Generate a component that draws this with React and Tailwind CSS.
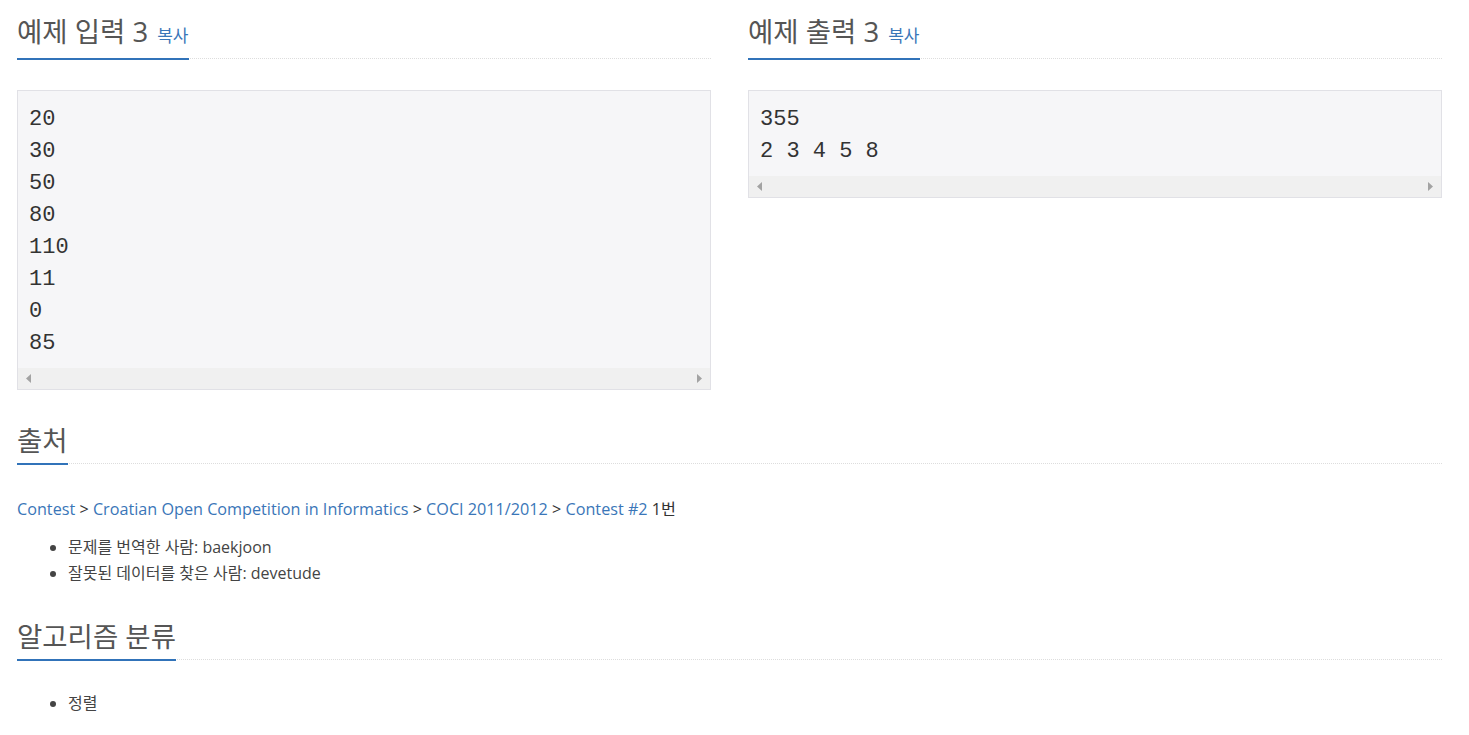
import React from "react";

const FONT = { fontFamily: '"Open Sans", "Noto Sans CJK KR", sans-serif' };
const HFONT = { fontFamily: '"Open Sans", "Noto Sans CJK KR", sans-serif' };
const MONO = { fontFamily: '"Liberation Mono", monospace' };

function Headline({ children, copy, mb = "mb-[31px]" }) {
  return (
    <div className={`border-b border-dotted border-[#dddddd] pt-[14px] ${mb}`}>
      <h2
        className="inline-block border-b-2 border-[#3173b9] mb-[-2px] pb-[4px] text-[27.5px] leading-[36px] font-normal text-[#555555]"
        style={HFONT}
      >
        {children}
        {copy && (
          <span className="ml-[9px] text-[17px] text-[#3a76b8]">복사</span>
        )}
      </h2>
    </div>
  );
}

function Arrow({ dir }) {
  return (
    <svg width="6" height="9" viewBox="0 0 6 9">
      {dir === "left" ? (
        <polygon points="5,0 5,9 0,4.5" fill="#a3a3a3" />
      ) : (
        <polygon points="1,0 1,9 6,4.5" fill="#a3a3a3" />
      )}
    </svg>
  );
}

function Pre({ lines }) {
  return (
    <div className="border border-[#e1e1e6] bg-[#f6f6f8]">
      <pre
        className="pl-[11px] pt-[13px] pb-[8px] text-[22px] leading-[32px] text-[#333333] m-0"
        style={MONO}
      >
        {lines.join("\n")}
      </pre>
      <div className="h-[21px] bg-[#f0f0f0] flex items-center justify-between pl-[8px] pr-[8px]">
        <Arrow dir="left" />
        <Arrow dir="right" />
      </div>
    </div>
  );
}

export default function App() {
  return (
    <div className="bg-white min-h-[735px] pl-[17px] pr-[27px] text-[#333333]" style={FONT}>
      <div className="grid grid-cols-2 gap-[37px]">
        <div>
          <Headline copy>예제 입력 3</Headline>
          <Pre lines={["20", "30", "50", "80", "110", "11", "0", "85"]} />
        </div>
        <div>
          <Headline copy>예제 출력 3</Headline>
          <Pre lines={["355", "2 3 4 5 8"]} />
        </div>
      </div>

      <div className="mt-[19px]">
        <Headline mb="mb-[32px]">출처</Headline>
        <p className="text-[16.2px] leading-[26px] text-[#333333]">
          <a className="text-[#3a76b8]">Contest</a> &gt;{" "}
          <a className="text-[#3a76b8]">Croatian Open Competition in Informatics</a> &gt;{" "}
          <a className="text-[#3a76b8]">COCI 2011/2012</a> &gt;{" "}
          <a className="text-[#3a76b8]">Contest #2</a> 1번
        </p>
        <ul className="list-disc pl-[51px] mt-[12px] text-[16px] leading-[26px] text-[#444444]">
          <li>문제를 번역한 사람: baekjoon</li>
          <li>잘못된 데이터를 찾은 사람: devetude</li>
        </ul>
      </div>

      <div className="mt-[19px]">
        <Headline mb="mb-[30px]">알고리즘 분류</Headline>
        <ul className="list-disc pl-[51px] text-[16px] leading-[26px] text-[#444444]">
          <li>정렬</li>
        </ul>
      </div>
    </div>
  );
}
